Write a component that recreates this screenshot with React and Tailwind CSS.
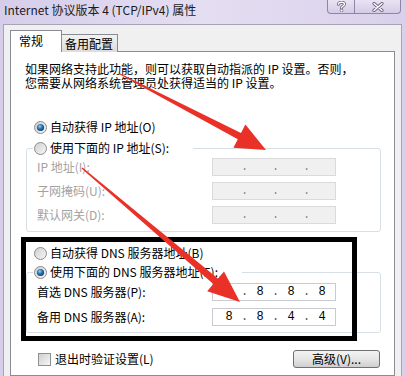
import React from "react"

const FONT = { fontFamily: '"Noto Sans CJK SC", "Noto Sans", sans-serif' }

const Radio = ({ checked }) => (
  <svg width="13" height="13" viewBox="0 0 13 13" className="shrink-0">
    <defs>
      <linearGradient id="rbFill" x1="0" y1="0" x2="1" y2="1">
        <stop offset="0" stopColor="#cfcfcf" />
        <stop offset="1" stopColor="#f7f7f7" />
      </linearGradient>
      <radialGradient id="rbDot" cx="0.4" cy="0.35" r="0.7">
        <stop offset="0" stopColor="#9fd3f5" />
        <stop offset="0.45" stopColor="#2a78b8" />
        <stop offset="1" stopColor="#0f3b66" />
      </radialGradient>
    </defs>
    <circle cx="6.5" cy="6.5" r="6" fill="url(#rbFill)" stroke="#8c8c8c" />
    {checked && <circle cx="6.5" cy="6.5" r="3.6" fill="url(#rbDot)" />}
  </svg>
)

const RadioRow = ({ checked, label, className = "" }) => (
  <div className={`flex items-center gap-[3px] h-[14px] text-[12px] leading-[14px] text-black ${className}`}>
    <Radio checked={checked} />
    <span>{label}</span>
  </div>
)

const IpBox = ({ values, disabled }) => (
  <div
    className={`w-[124px] h-[18px] border flex items-end pb-[1px] pl-[12px] text-[12px] leading-[14px] ${
      disabled ? "bg-[#f0f0f0] border-[#dadada] text-[#9a9a9a]" : "bg-white border-[#c9cbd0] text-black"
    }`}
    style={{ fontFamily: '"Liberation Mono", monospace' }}
  >
    {[0, 1, 2, 3].map((i) => (
      <React.Fragment key={i}>
        <span className="w-[8px] text-center">{values ? values[i] : ""}</span>
        {i < 3 && <span className={`w-[23px] text-center ${disabled ? "text-[#8a8a8a]" : "text-[#555]"}`}>.</span>}
      </React.Fragment>
    ))}
  </div>
)

const Row = ({ label, disabled, values }) => (
  <div className="flex items-center h-[18px]">
    <span className={`w-[175px] text-[12px] leading-[14px] ${disabled ? "text-[#a3a3a3]" : "text-black"}`}>{label}</span>
    <IpBox disabled={disabled} values={values} />
  </div>
)

// tapering red annotation arrow
const arrowPoints = (x1, y1, x2, y2, headLen, headW, tailW, neckW) => {
  const dx = x2 - x1
  const dy = y2 - y1
  const L = Math.hypot(dx, dy)
  const ux = dx / L
  const uy = dy / L
  const nx = -uy
  const ny = ux
  const bx = x2 - ux * headLen
  const by = y2 - uy * headLen
  const p = (x, y, w) => [x + nx * w, y + ny * w]
  const pts = [
    p(x1, y1, tailW / 2),
    p(bx, by, neckW / 2),
    p(bx, by, headW / 2),
    [x2, y2],
    p(bx, by, -headW / 2),
    p(bx, by, -neckW / 2),
    p(x1, y1, -tailW / 2),
  ]
  return pts.map((q) => q.map((v) => v.toFixed(1)).join(",")).join(" ")
}

export default function App() {
  return (
    <div className="relative w-[405px] h-[376px] overflow-hidden bg-gradient-to-r from-[#d6cdea] via-[#e4def2] to-[#d9d1eb]" style={FONT}>
      {/* title bar */}
      <div className="flex items-start h-[24px]">
        <span className="pl-[4px] mt-[2px] text-[12px] leading-[16px] text-[#1b1b1b]">Internet 协议版本 4 (TCP/IPv4) 属性</span>
        <div className="ml-auto mr-[4px] flex h-[14px] border border-t-0 border-[#8d86a4] rounded-b-[4px] overflow-hidden bg-gradient-to-b from-[#e9e4f4] to-[#d4cbe6]">
          <div className="w-[27px] flex items-center justify-center border-r border-[#8d86a4]">
            <svg width="9" height="11" viewBox="0 0 9 11">
              <path d="M1.5 3.2 C1.5 0.6 7.5 0.6 7.5 3.2 C7.5 5 4.5 5 4.5 7" fill="none" stroke="#6d6780" strokeWidth="3" strokeLinecap="round" />
              <path d="M1.5 3.2 C1.5 0.6 7.5 0.6 7.5 3.2 C7.5 5 4.5 5 4.5 7" fill="none" stroke="#fff" strokeWidth="1.3" strokeLinecap="round" />
              <circle cx="4.5" cy="9.6" r="1.4" fill="#fff" stroke="#6d6780" strokeWidth="0.8" />
            </svg>
          </div>
          <div className="w-[45px] flex items-center justify-center">
            <svg width="12" height="10" viewBox="0 0 12 10">
              <path d="M2 1.5 L10 8.5 M10 1.5 L2 8.5" stroke="#6d6780" strokeWidth="3.2" strokeLinecap="round" />
              <path d="M2 1.5 L10 8.5 M10 1.5 L2 8.5" stroke="#fff" strokeWidth="1.4" strokeLinecap="round" />
            </svg>
          </div>
        </div>
      </div>

      {/* client area */}
      <div className="mx-[3px] h-[352px] bg-[#f0f0f0] border-t border-x border-[#a7a3b4] pt-[5px] px-[6px] flex flex-col">
        {/* tabs */}
        <div className="flex items-end h-[22px] relative z-10">
          <div className="w-[52px] h-[22px] bg-white border border-b-0 border-[#898c95] pl-[8px] pt-[2px] text-[12px] leading-[16px] text-black">常规</div>
          <div className="w-[56px] h-[18px] border border-l-0 border-b-0 border-[#898c95] bg-gradient-to-b from-[#f2f2f2] to-[#dcdcdc] pl-[3px] text-[12px] leading-[17px] text-black">备用配置</div>
        </div>

        {/* panel */}
        <div className="-mt-px flex-1 bg-white border border-[#898c95] flex flex-col">
          <p className="pl-[14px] pt-[10px] text-[12px] leading-[14px] text-black">
            如果网络支持此功能，则可以获取自动指派的 IP 设置。否则，
            <br />
            您需要从网络系统管理员处获得适当的 IP 设置。
          </p>

          <RadioRow className="mt-[30px] ml-[23px]" checked label="自动获得 IP 地址(O)" />

          <fieldset className="mt-[7px] ml-[15px] w-[355px] h-[91px] border border-[#d5dfe5] rounded-[3px]">
            <legend className="ml-[6px] pl-[1px] pr-[24px]">
              <RadioRow label="使用下面的 IP 地址(S):" />
            </legend>
            <div className="flex flex-col gap-[6px] pt-[3px] pl-[10px]">
              <Row disabled label="IP 地址(I):" />
              <Row disabled label="子网掩码(U):" />
              <Row disabled label="默认网关(D):" />
            </div>
          </fieldset>

          <RadioRow className="mt-[14px] ml-[23px]" label="自动获得 DNS 服务器地址(B)" />

          <fieldset className="mt-[5px] ml-[15px] w-[355px] h-[68px] border border-[#d5dfe5] rounded-[3px]">
            <legend className="ml-[6px] pl-[1px] pr-[24px]">
              <RadioRow checked label="使用下面的 DNS 服务器地址(E):" />
            </legend>
            <div className="flex flex-col gap-[7px] pt-[4px] pl-[10px]">
              <Row label="首选 DNS 服务器(P):" values={["8", "8", "8", "8"]} />
              <Row label="备用 DNS 服务器(A):" values={["8", "8", "4", "4"]} />
            </div>
          </fieldset>

          <div className="mt-[17px] flex items-center justify-between pl-[27px] pr-[14px]">
            <div className="flex items-center gap-[4px] text-[12px] leading-[14px] text-black">
              <span className="w-[13px] h-[13px] border border-[#8f8f8f] bg-gradient-to-br from-[#d0d0d0] to-[#f6f6f6]" />
              <span>退出时验证设置(L)</span>
            </div>
            <button className="w-[87px] h-[18px] border border-[#707070] rounded-[3px] bg-gradient-to-b from-[#f3f3f3] via-[#e6e6e6] to-[#cfcfcf] text-[12px] leading-[14px] text-black">
              高级(V)...
            </button>
          </div>
        </div>
      </div>

      {/* annotation overlays */}
      <div className="absolute left-[21px] top-[237px] w-[336px] h-[104px] border-[5px] border-black pointer-events-none" />
      <svg className="absolute left-0 top-0 pointer-events-none" width="405" height="376">
        <polygon points={arrowPoints(120, 74, 266, 150, 30, 26, 1, 7)} fill="#ea3128" />
        <polygon points={arrowPoints(82, 168, 240, 302, 32, 26, 1.5, 7)} fill="#ea3128" />
      </svg>
    </div>
  )
}
